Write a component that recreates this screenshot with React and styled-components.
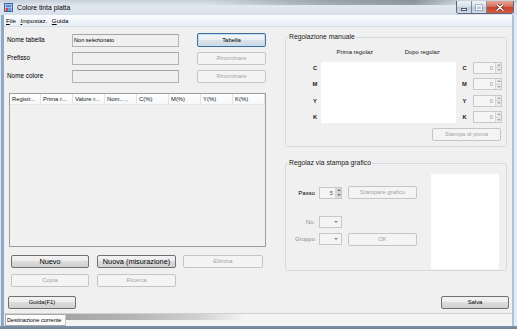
import React from 'react';
import styled, { createGlobalStyle, css } from 'styled-components';

const Global = createGlobalStyle`
  html, body { margin: 0; padding: 0; background: #fff; }
  body { font-family: "Liberation Sans", Arial, sans-serif; color: #000; }
  * { box-sizing: border-box; }
`;

const FONT = `"Liberation Sans", Arial, sans-serif`;

const Window = styled.div`
  width: 517px;
  height: 329px;
  display: flex;
  flex-direction: column;
  overflow: hidden;
  background: #b4c6dc;
`;

const TitleBar = styled.div`
  height: 15px;
  flex: none;
  display: flex;
  align-items: center;
  padding-left: 4px;
  background:
    linear-gradient(to right, transparent 40%, rgba(70, 80, 92, 0.35) 62%, rgba(60, 70, 82, 0.45) 80%, transparent 90%) top / 100% 5px no-repeat,
    linear-gradient(to bottom, #c6cfd9 0%, #e2e8ef 40%, #d6dfea 100%);
`;

const Title = styled.span`
  font-size: 6.8px;
  line-height: 8px;
  margin-left: 4px;
  color: #000;
`;

const Caption = styled.div`
  margin-left: auto;
  margin-right: 3px;
  align-self: flex-start;
  display: flex;
  height: 13px;
  margin-top: 1px;
  border-radius: 0 0 3px 3px;
  overflow: hidden;
  border: 1px solid rgba(55, 65, 85, 0.75);
  border-top: none;
`;

const CapBtn = styled.div`
  width: ${(p) => p.$w}px;
  height: 100%;
  display: flex;
  align-items: center;
  justify-content: center;
  ${(p) =>
    p.$close
      ? css`
          background: linear-gradient(#e9a695 0%, #d67560 45%, #c4442c 52%, #d45c40 100%);
        `
      : css`
          background: linear-gradient(#eef2f7 0%, #d6dfea 45%, #bccadb 52%, #cbd8e7 100%);
          border-right: 1px solid rgba(55, 65, 85, 0.55);
        `}
`;

const MinGlyph = styled.div`
  width: 6px;
  height: 3px;
  margin-top: 4px;
  background: #fff;
  border: 1px solid #4a5566;
`;

const MaxGlyph = styled.div`
  width: 6px;
  height: 5px;
  border: 1px solid rgba(255, 255, 255, 0.8);
  outline: 1px solid rgba(90, 100, 115, 0.35);
`;

const Frame = styled.div`
  flex: 1;
  display: flex;
  padding: 0 5px 3px 4px;
  background:
    linear-gradient(to top, #6f8299 0, #7f92aa 3px, transparent 3px),
    linear-gradient(to right, #dfe6ee 0, #dfe6ee 1px, #8ea8c7 1px, #8ea8c7 4px, #b4c6dc 4px, #b4c6dc calc(100% - 5px), #a9c3e0 calc(100% - 5px), #a9c3e0 calc(100% - 3px), #e6ebf1 calc(100% - 3px));
`;

const Client = styled.div`
  flex: 1;
  display: flex;
  flex-direction: column;
  background: #f0f0f0;
  min-width: 0;
`;

const MenuBar = styled.div`
  height: 12px;
  flex: none;
  display: flex;
  align-items: center;
  gap: 4.5px;
  padding-left: 2px;
  background: linear-gradient(#fbfcfe, #e8eef7);
  border-bottom: 1px solid #d4dcea;
`;

const MenuItem = styled.span`
  font-size: 6.2px;
  line-height: 8px;
  color: #000;
  u { text-decoration: underline; }
`;

const Body = styled.div`
  flex: 1;
  display: flex;
  flex-direction: column;
  padding: 6px 3px 0 3px;
`;

const Main = styled.div`
  display: flex;
  align-items: flex-start;
`;

const LeftCol = styled.div`
  width: 259px;
  display: flex;
  flex-direction: column;
`;

const RightCol = styled.div`
  width: 222px;
  margin-left: 19px;
  display: flex;
  flex-direction: column;
`;

const FormGrid = styled.div`
  display: grid;
  grid-template-columns: 65px 107px 1fr;
  grid-auto-rows: 14px;
  row-gap: 4px;
  align-items: center;
`;

const Label = styled.span`
  font-size: 6.4px;
  line-height: 8px;
  color: ${(p) => (p.$dim ? '#8c8c8c' : '#000')};
  font-weight: ${(p) => (p.$bold ? 'bold' : 'normal')};
`;

const TextBox = styled.div`
  height: 13px;
  border: 1px solid #b3b3b3;
  border-top-color: #a4a4a4;
  background: #f0f0f0;
  font-size: 5.6px;
  line-height: 11px;
  padding-left: 1px;
  color: #000;
`;

const Button = styled.button`
  font-family: ${FONT};
  width: ${(p) => p.$w}px;
  height: ${(p) => p.$h || 13}px;
  padding: 0;
  margin: 0;
  font-size: ${(p) => (p.$big ? 7.3 : 5.9)}px;
  line-height: 11px;
  color: #000;
  border: 1px solid #707070;
  border-radius: 2px;
  background: linear-gradient(#f3f3f3 0%, #ebebeb 50%, #dddddd 50%, #cfcfcf 100%);
  justify-self: end;
  flex: none;
  ${(p) =>
    p.$focus &&
    css`
      border-color: #3c6f9e;
      box-shadow: inset 0 0 0 1px #c4dff2;
      background: linear-gradient(#f4f7fa 0%, #e9eef3 50%, #dbe3eb 50%, #cfd9e3 100%);
    `}
  &:disabled {
    color: #a3a3a3;
    border-color: #c3c6c9;
    background: #f4f4f4;
  }
`;

const Table = styled.div`
  margin-top: 10px;
  margin-left: 2px;
  width: 257px;
  height: 154px;
  border: 1px solid #9a9ea6;
  background: #f0f0f0;
  display: flex;
  flex-direction: column;
`;

const HeaderRow = styled.div`
  height: 11px;
  display: flex;
  background: linear-gradient(#ffffff, #f6f7f9);
  border-bottom: 1px solid #e4e6ea;
`;

const HeaderCell = styled.div`
  width: ${(p) => p.$w}px;
  flex: none;
  border-right: 1px solid #e0e3e8;
  font-size: 5.9px;
  line-height: 10px;
  padding-left: 2px;
  white-space: nowrap;
  overflow: hidden;
  color: #1a1a1a;
`;

const ButtonRow = styled.div`
  display: flex;
  gap: ${(p) => p.$gap || 8}px;
  margin-top: ${(p) => p.$mt}px;
  padding-left: 4px;
`;

const BottomRow = styled.div`
  display: flex;
  justify-content: space-between;
  margin-top: 9px;
  padding-left: 1px;
`;

const Group = styled.fieldset`
  margin: ${(p) => p.$mt || 0}px 0 0 0;
  padding: 0;
  min-width: 0;
  border: 1px solid #d6dbe0;
  border-radius: 2px;
`;

const Legend = styled.legend`
  font-size: 6.8px;
  line-height: 8px;
  height: 8px;
  padding: 0 1px;
  margin-left: 2px;
  color: #1a1a1a;
`;

const ManualInner = styled.div`
  padding: 6px 4px 5px 23px;
  display: flex;
  flex-direction: column;
`;

const ManualGrid = styled.div`
  display: grid;
  grid-template-columns: 12px 135px 17px 29px;
  grid-template-rows: 10px repeat(4, 12px);
  row-gap: 4.5px;
  align-items: center;
`;

const ColHeads = styled.div`
  grid-column: 2;
  grid-row: 1;
  display: flex;
`;

const ColHead = styled.span`
  flex: 1;
  text-align: center;
  font-size: 5.9px;
  line-height: 10px;
  color: #1a1a1a;
`;

const Letter = styled.span`
  grid-column: ${(p) => p.$col};
  grid-row: ${(p) => p.$row};
  text-align: center;
  font-size: 5.8px;
  font-weight: bold;
  line-height: 12px;
  color: #222;
`;

const WhiteBox = styled.div`
  background: #fff;
  ${(p) =>
    p.$grid
      ? css`
          grid-column: 2;
          grid-row: 2 / span 4;
          align-self: stretch;
        `
      : css`
          width: 68px;
          height: 95px;
          flex: none;
        `}
`;

const Spin = styled.div`
  grid-column: ${(p) => p.$col || 'auto'};
  grid-row: ${(p) => p.$row || 'auto'};
  width: ${(p) => p.$w}px;
  height: 12px;
  display: flex;
  border: 1px solid #c7cacd;
  background: #f5f5f5;
  flex: none;
`;

const SpinValue = styled.span`
  flex: 1;
  text-align: right;
  padding-right: 2px;
  font-size: 5.8px;
  line-height: 10px;
  color: ${(p) => (p.$dark ? '#555' : '#9a9a9a')};
`;

const SpinArrows = styled.div`
  width: 6px;
  display: flex;
  flex-direction: column;
  border-left: 1px solid #d6d6d6;
  background: ${(p) => (p.$dark ? '#d9d9d9' : '#ececec')};
`;

const SpinArrow = styled.div`
  flex: 1;
  display: flex;
  align-items: center;
  justify-content: center;
  & + & { border-top: 1px solid #d6d6d6; }
`;

const Tri = ({ down, color = '#9a9a9a' }) => (
  <svg width="4" height="2" viewBox="0 0 4 2" style={{ display: 'block' }}>
    <path d={down ? 'M0 0 L4 0 L2 2 Z' : 'M0 2 L4 2 L2 0 Z'} fill={color} />
  </svg>
);

const ProvaRow = styled.div`
  display: flex;
  justify-content: flex-end;
  margin-top: 5px;
  margin-right: 1px;
`;

const GraphInner = styled.div`
  display: flex;
  padding: 7px 7px 1px 0;
`;

const GraphLeft = styled.div`
  flex: 1;
  display: flex;
  flex-direction: column;
`;

const FieldRow = styled.div`
  display: flex;
  align-items: center;
  height: 13px;
  margin-top: ${(p) => p.$mt}px;
`;

const FieldLabel = styled.span`
  width: 30px;
  text-align: right;
  padding-right: 1px;
  font-size: 6px;
  line-height: 8px;
  color: ${(p) => (p.$dim ? '#8e8e8e' : '#000')};
  margin-right: 3px;
  flex: none;
`;

const Combo = styled.div`
  width: 23px;
  height: 12px;
  border: 1px solid #c6c8cb;
  background: #f4f4f4;
  display: flex;
  align-items: center;
  justify-content: flex-end;
  padding-right: 3px;
  flex: none;
`;

const Spacer = styled.div`
  width: ${(p) => p.$w}px;
  flex: none;
`;

const StatusBar = styled.div`
  height: 13px;
  flex: none;
  display: flex;
  align-items: stretch;
  border-top: 1px solid #d0d0d0;
  background: #f4f4f4;
`;

const StatusPanel = styled.div`
  width: 61px;
  margin-left: 1px;
  border: 1px solid #a9a9a9;
  border-right-color: #c8c8c8;
  background: #fbfbfb;
  font-size: 5.6px;
  line-height: 10px;
  padding-left: 1px;
  white-space: nowrap;
  color: #000;
`;

const StatusGlow = styled.div`
  width: 178px;
  height: 6px;
  margin-top: 0px;
  background: linear-gradient(to right, #9b9b9b 0%, #b0b0b0 40%, #cdcdcd 75%, rgba(244, 244, 244, 0) 100%);
  opacity: 0.9;
`;

const cols = [
  ['Registr...', 31],
  ['Prima r...', 32],
  ['Valore r...', 32],
  ['Nom... ,', 32],
  ['C(%)', 32],
  ['M(%)', 32],
  ['Y(%)', 32],
  ['K(%)', 32],
];

const letters = ['C', 'M', 'Y', 'K'];

function SpinField({ value, w, col, row, dark }) {
  return (
    <Spin $w={w} $col={col} $row={row}>
      <SpinValue $dark={dark}>{value}</SpinValue>
      <SpinArrows $dark={dark}>
        <SpinArrow><Tri color={dark ? '#777' : '#a8a8a8'} /></SpinArrow>
        <SpinArrow><Tri down color={dark ? '#777' : '#a8a8a8'} /></SpinArrow>
      </SpinArrows>
    </Spin>
  );
}

function AppIcon() {
  return (
    <svg width="9" height="9" viewBox="0 0 9 9" style={{ display: 'block' }}>
      <rect x="0.5" y="0.5" width="8" height="8" fill="#e8eef8" stroke="#3d64a8" />
      <rect x="1.5" y="1.5" width="6" height="3" fill="#5b8fd8" />
      <rect x="1.5" y="5" width="3" height="3" fill="#d9443a" />
      <rect x="4.5" y="5" width="3" height="3" fill="#4aa0e0" />
    </svg>
  );
}

export default function App() {
  return (
    <>
      <Global />
      <Window>
        <TitleBar>
          <AppIcon />
          <Title>Colore tinta piatta</Title>
          <Caption>
            <CapBtn $w={15}><MinGlyph /></CapBtn>
            <CapBtn $w={15}><MaxGlyph /></CapBtn>
            <CapBtn $w={26} $close>
              <svg width="8" height="7" viewBox="0 0 8 7" style={{ display: 'block' }}>
                <path d="M1 0.8 L7 6.2 M7 0.8 L1 6.2" stroke="#5a1a10" strokeWidth="2.6" strokeLinecap="round" />
                <path d="M1 0.8 L7 6.2 M7 0.8 L1 6.2" stroke="#ffffff" strokeWidth="1.5" strokeLinecap="round" />
              </svg>
            </CapBtn>
          </Caption>
        </TitleBar>
        <Frame>
          <Client>
            <MenuBar>
              <MenuItem><u>F</u>ile</MenuItem>
              <MenuItem><u>I</u>mpostaz.</MenuItem>
              <MenuItem><u>G</u>uida</MenuItem>
            </MenuBar>
            <Body>
              <Main>
                <LeftCol>
                  <FormGrid>
                    <Label>Nome tabella</Label>
                    <TextBox>Non selezionato</TextBox>
                    <Button $w={69} $h={14} $focus>Tabella</Button>
                    <Label>Prefisso</Label>
                    <TextBox />
                    <Button $w={69} disabled>Rinominare</Button>
                    <Label>Nome colore</Label>
                    <TextBox />
                    <Button $w={69} disabled>Rinominare</Button>
                  </FormGrid>
                  <Table>
                    <HeaderRow>
                      {cols.map(([t, w]) => (
                        <HeaderCell key={t} $w={w}>{t}</HeaderCell>
                      ))}
                    </HeaderRow>
                  </Table>
                  <ButtonRow $mt={8}>
                    <Button $w={78} $big>Nuevo</Button>
                    <Button $w={79} $big>Nuova (misurazione)</Button>
                    <Button $w={80} disabled style={{ marginLeft: -1 }}>Elimina</Button>
                  </ButtonRow>
                  <ButtonRow $mt={6}>
                    <Button $w={78} disabled>Copia</Button>
                    <Button $w={79} disabled>Ricerca</Button>
                  </ButtonRow>
                </LeftCol>
                <RightCol>
                  <Group>
                    <Legend>Regolazione manuale</Legend>
                    <ManualInner>
                      <ManualGrid>
                        <ColHeads>
                          <ColHead>Prima regolaz</ColHead>
                          <ColHead>Dopo regolaz</ColHead>
                        </ColHeads>
                        {letters.map((l, i) => (
                          <React.Fragment key={l}>
                            <Letter $col={1} $row={i + 2}>{l}</Letter>
                            <Letter $col={3} $row={i + 2}>{l}</Letter>
                            <SpinField value="0" w={29} col={4} row={i + 2} />
                          </React.Fragment>
                        ))}
                        <WhiteBox $grid />
                      </ManualGrid>
                      <ProvaRow>
                        <Button $w={69} disabled>Stampa di prova</Button>
                      </ProvaRow>
                    </ManualInner>
                  </Group>
                  <Group $mt={12}>
                    <Legend>Regolaz via stampa grafico</Legend>
                    <GraphInner>
                      <GraphLeft>
                        <FieldRow $mt={12}>
                          <FieldLabel>Passo</FieldLabel>
                          <SpinField value="5" w={23} dark />
                          <Spacer $w={6} />
                          <Button $w={69} disabled>Stampare grafico</Button>
                        </FieldRow>
                        <FieldRow $mt={16}>
                          <FieldLabel $dim>No.</FieldLabel>
                          <Combo><Tri down color="#8a8a8a" /></Combo>
                        </FieldRow>
                        <FieldRow $mt={4}>
                          <FieldLabel $dim>Gruppo</FieldLabel>
                          <Combo><Tri down color="#8a8a8a" /></Combo>
                          <Spacer $w={6} />
                          <Button $w={69} disabled style={{ marginTop: 2 }}>OK</Button>
                        </FieldRow>
                      </GraphLeft>
                      <WhiteBox />
                    </GraphInner>
                  </Group>
                </RightCol>
              </Main>
              <BottomRow>
                <Button $w={68}>Guida(F1)</Button>
                <Button $w={68}>Salva</Button>
              </BottomRow>
            </Body>
            <StatusBar>
              <StatusPanel>Destinazione corrente</StatusPanel>
              <StatusGlow />
            </StatusBar>
          </Client>
        </Frame>
      </Window>
    </>
  );
}
